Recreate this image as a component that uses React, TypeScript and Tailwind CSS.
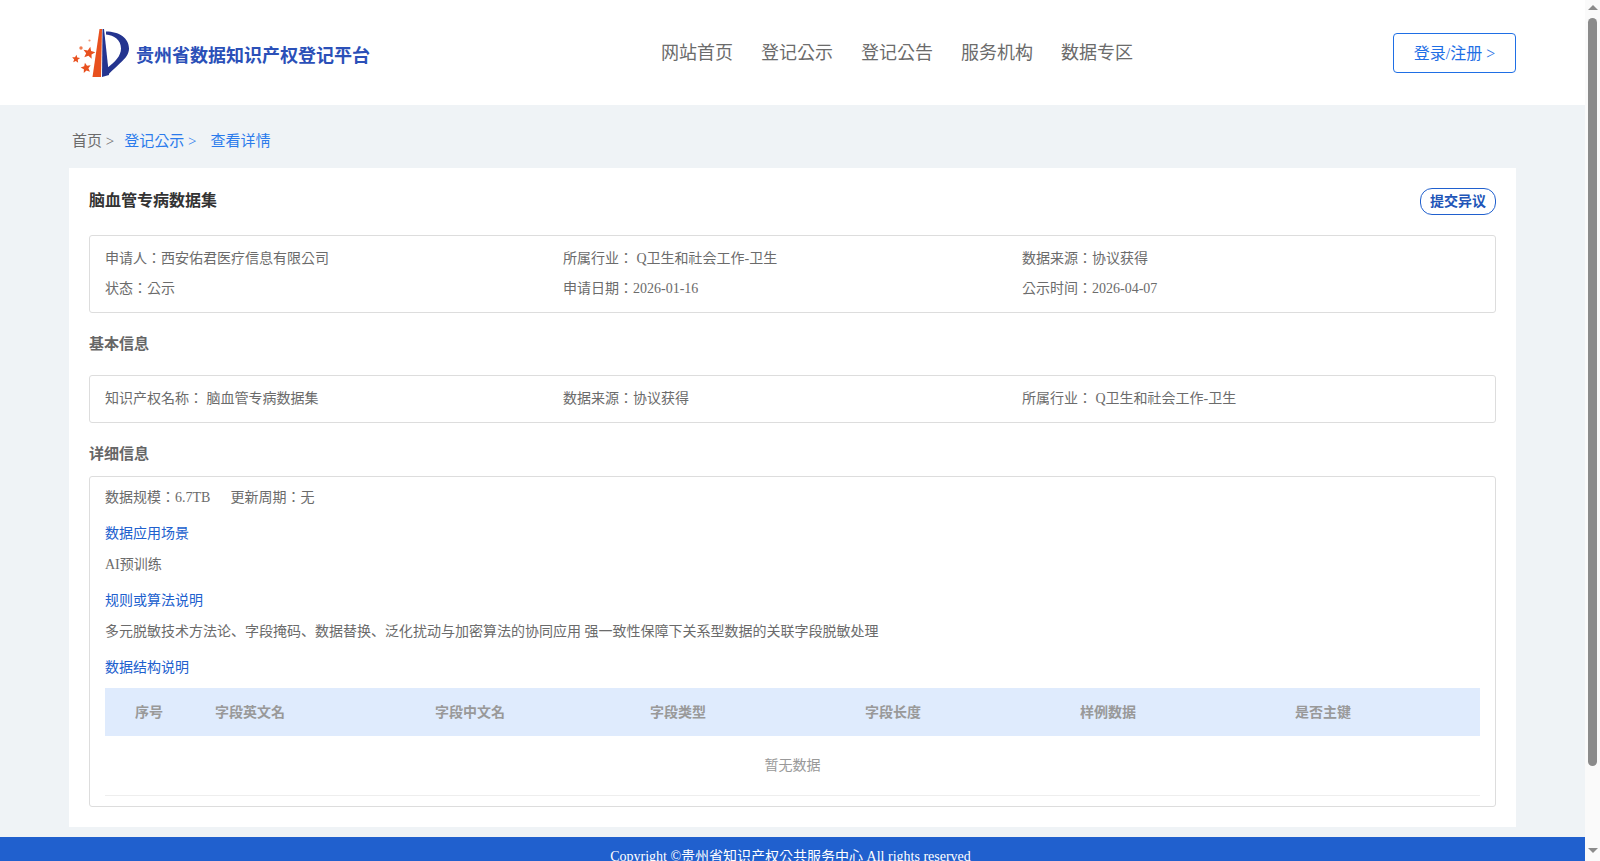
const navItems = ["网站首页", "登记公示", "登记公告", "服务机构", "数据专区"];
const columns = ["序号", "字段英文名", "字段中文名", "字段类型", "字段长度", "样例数据", "是否主键"];

// five pointed star around cx,cy
function star(cx: number, cy: number, r: number, rot = 0) {
  const pts: string[] = [];
  for (let i = 0; i < 10; i++) {
    const rad = i % 2 === 0 ? r : r * 0.45;
    const a = -Math.PI / 2 + (i * Math.PI) / 5 + rot;
    pts.push(`${(cx + rad * Math.cos(a)).toFixed(2)},${(cy + rad * Math.sin(a)).toFixed(2)}`);
  }
  return pts.join(" ");
}

function Logo() {
  return (
    <svg width="61" height="60" viewBox="0 0 61 60" className="shrink-0 mt-[5px]">
      <path d="M29.5 4 L32 4 L31 52 L22.5 52 Z" fill="#e8501e" />
      <path d="M32.5 4 L34 4 L39 50 L32 52 Z" fill="#24348f" />
      <path d="M36 6.5 C49 6.5 59 13 59 23.5 C59 33 49 38 38 50 L37 43 C45 37 51 31 51 23.5 C51 15 44 10 36 9.5 Z" fill="#24348f" />
      <polygon points={star(19, 28, 6.4, 0.2)} fill="#e8501e" />
      <polygon points={star(6, 34, 4.2, 0.1)} fill="#e8501e" />
      <polygon points={star(16, 43, 5.4, -0.2)} fill="#e8501e" />
      <circle cx="11" cy="23" r="1.7" fill="#ef7a50" />
      <circle cx="19.5" cy="15.5" r="1.1" fill="#ef9a7a" />
    </svg>
  );
}

function InfoRow({ items }: { items: string[] }) {
  return (
    <div className="grid grid-cols-[458px_459px_1fr]">
      {items.map((t) => (
        <div key={t}>{t}</div>
      ))}
    </div>
  );
}

export default function App() {
  return (
    <div className="flex h-screen overflow-hidden font-['Liberation_Serif','Noto_Sans_CJK_KR',serif] text-[14px] text-[#6b6b6b]">
      <div className="flex-1 min-w-0 overflow-hidden bg-[#eff3f6]">
        {/* header */}
        <header className="h-[105px] bg-white flex items-center pl-[70px] pr-[69px]">
          <div className="w-[591px] flex items-center">
            <Logo />
            <span className="ml-[5px] mt-[8px] text-[18px] font-bold text-[#2b50b8] whitespace-nowrap">贵州省数据知识产权登记平台</span>
          </div>
          <nav className="flex gap-[28px] pt-[1px] text-[18px] text-[#6b6b6b]">
            {navItems.map((n) => (
              <a key={n}>{n}</a>
            ))}
          </nav>
          <button className="ml-auto mt-[1px] w-[123px] h-[40px] pt-[1px] rounded-[4px] border border-[#1f6fe5] bg-white text-[16px] text-[#1f6fe5]">登录/注册 &gt;</button>
        </header>

        {/* breadcrumb */}
        <div className="h-[63px] pl-[72px] flex items-center pt-[10px] text-[15px] whitespace-pre">
          <span>首页 &gt;</span>
          <span className="ml-[10px] text-[#2b7bec]">登记公示 &gt;</span>
          <span className="ml-[14px] text-[#2b7bec]">查看详情</span>
        </div>

        {/* card */}
        <div className="ml-[69px] w-[1447px] h-[659px] bg-white px-[20px]">
          <div className="flex items-center justify-between h-[67px] pb-[2px]">
            <h1 className="text-[16px] font-bold text-[#333]">脑血管专病数据集</h1>
            <button className="mt-[2px] w-[76px] h-[27px] rounded-[12px] border border-[#2060ce] text-[14px] font-bold text-[#2155b8]">提交异议</button>
          </div>

          <div className="h-[78px] rounded-[3px] border border-[#ddd] px-[15px] pt-[8px] leading-[30px]">
            <InfoRow items={["申请人：西安佑君医疗信息有限公司", "所属行业： Q卫生和社会工作-卫生", "数据来源：协议获得"]} />
            <InfoRow items={["状态：公示", "申请日期：2026-01-16", "公示时间：2026-04-07"]} />
          </div>

          <h2 className="h-[62px] flex items-center text-[15px] font-bold text-[#666]">基本信息</h2>

          <div className="h-[48px] rounded-[3px] border border-[#ddd] px-[15px] pb-[1px] flex items-center">
            <div className="w-full">
              <InfoRow items={["知识产权名称： 脑血管专病数据集", "数据来源：协议获得", "所属行业： Q卫生和社会工作-卫生"]} />
            </div>
          </div>

          <h2 className="h-[53px] flex items-center pt-[10px] text-[15px] font-bold text-[#666]">详细信息</h2>

          <div className="h-[331px] rounded-[3px] border border-[#ddd] px-[15px]">
            <div className="pt-[11px] leading-[20px] flex gap-[20px]">
              <span>数据规模：6.7TB</span>
              <span>更新周期：无</span>
            </div>
            <div className="mt-[16px] leading-[20px] text-[#2060ce]">数据应用场景</div>
            <div className="mt-[11px] leading-[20px]">AI预训练</div>
            <div className="mt-[16px] leading-[20px] text-[#2060ce]">规则或算法说明</div>
            <div className="mt-[11px] leading-[20px]">多元脱敏技术方法论、字段掩码、数据替换、泛化扰动与加密算法的协同应用 强一致性保障下关系型数据的关联字段脱敏处理</div>
            <div className="mt-[16px] leading-[20px] text-[#2060ce]">数据结构说明</div>
            <div className="mt-[10px] h-[48px] bg-[#dfebfd] grid grid-cols-[110px_220px_215px_215px_215px_215px_1fr] items-center font-bold text-[#999]">
              {columns.map((c, i) => (
                <div key={c} className={i === 0 ? "pl-[30px]" : ""}>{c}</div>
              ))}
            </div>
            <div className="h-[60px] border-b border-[#eee] flex items-center justify-center text-[#999]">暂无数据</div>
          </div>
        </div>

        {/* footer */}
        <footer className="mt-[10px] h-[60px] bg-[#2060ce] pt-[10px] pr-[4px] text-center text-white leading-[20px]">
          Copyright ©贵州省知识产权公共服务中心 All rights reserved
        </footer>
      </div>

      {/* scrollbar */}
      <div className="w-[15px] shrink-0 bg-[#fafafa] flex flex-col items-center">
        <div className="mt-[5px] w-0 h-0 border-x-[5px] border-x-transparent border-b-[5px] border-b-[#8b8b8b]" />
        <div className="mt-[8px] w-[9px] h-[748px] rounded-[5px] bg-[#8b8b8b]" />
        <div className="mt-[82px] w-0 h-0 border-x-[5px] border-x-transparent border-t-[5px] border-t-[#8b8b8b]" />
      </div>
    </div>
  );
}
